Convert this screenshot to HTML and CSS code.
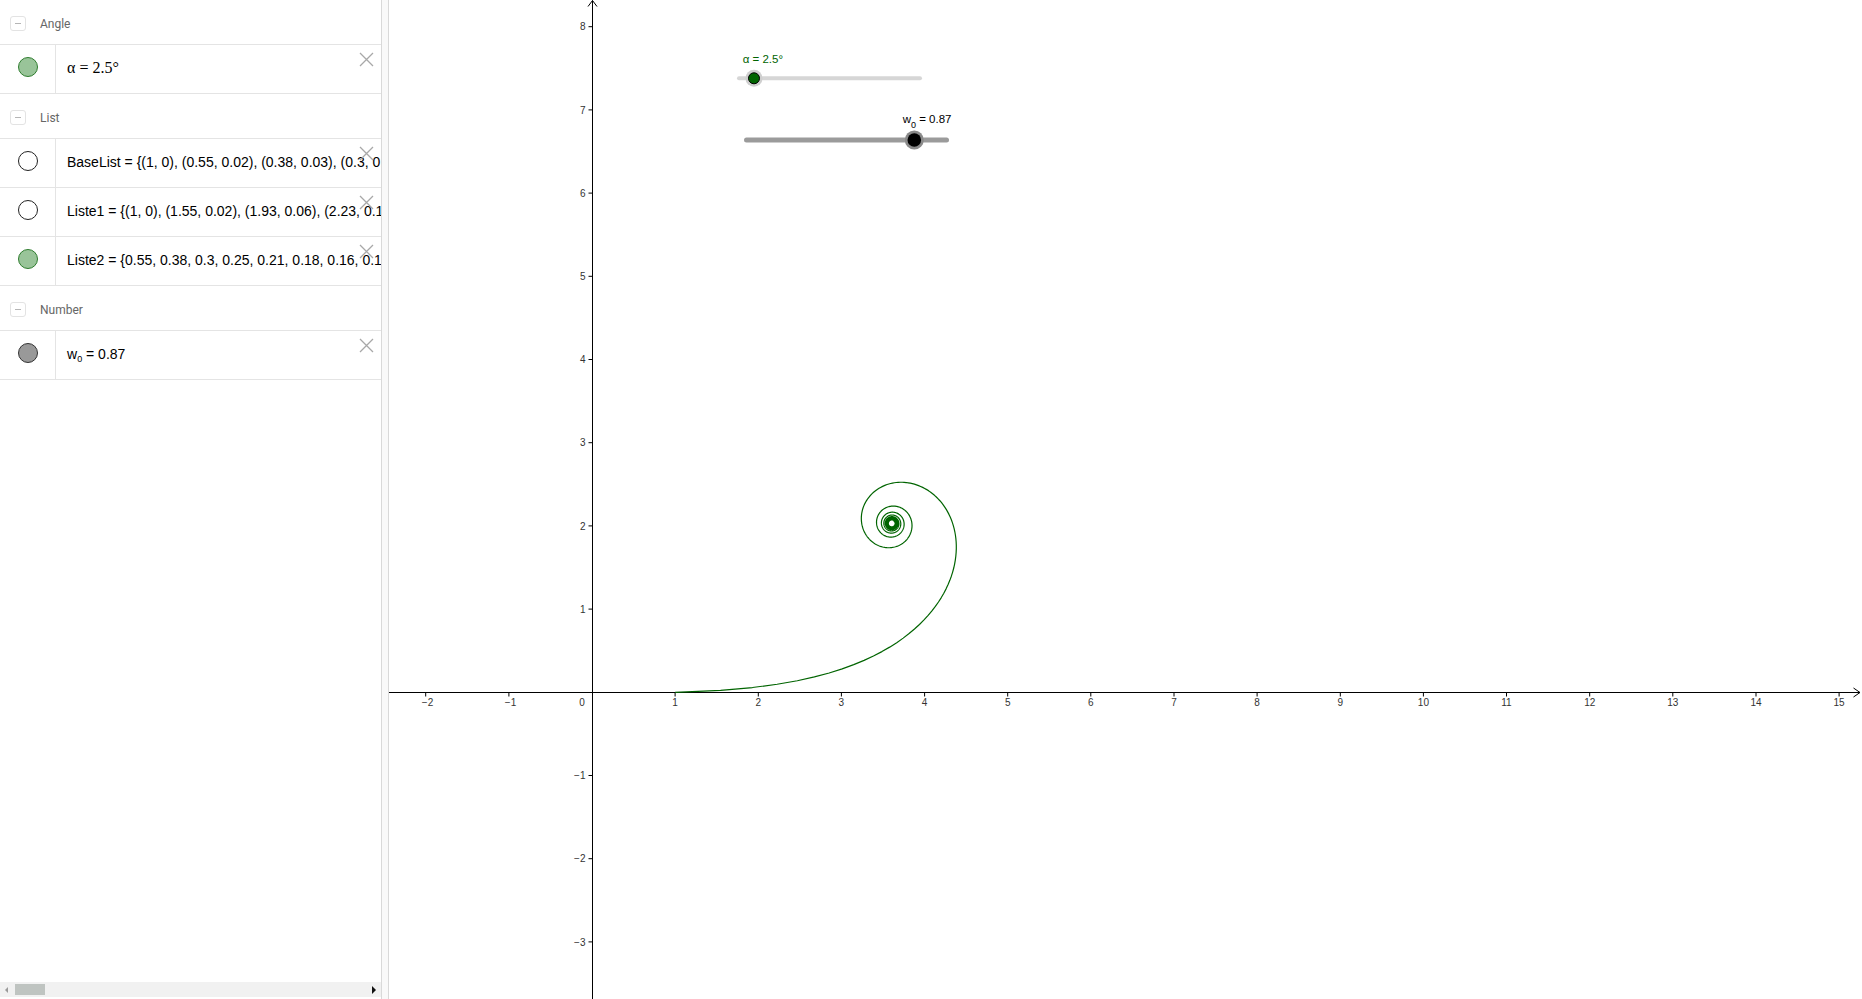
FILE: index.html
```html
<!DOCTYPE html>
<html>
<head>
<meta charset="utf-8">
<title>Spiral</title>
<link rel="stylesheet" href="styles.css">
</head>
<body>
<div class="app">
  <aside class="algebra">
    <div class="av-list">
      <div class="group"><span class="toggle"><span class="dash"></span></span><span class="group-name">Angle</span></div>
      <div class="item">
        <div class="marble-cell"><span class="marble green"></span></div>
        <div class="formula serif"><span class="text">α = 2.5°</span></div>
        <svg class="close" viewBox="0 0 15 15"><path d="M1 1 L14 14 M14 1 L1 14"/></svg>
      </div>

      <div class="group"><span class="toggle"><span class="dash"></span></span><span class="group-name">List</span></div>
      <div class="item">
        <div class="marble-cell"><span class="marble empty"></span></div>
        <div class="formula"><span class="text">BaseList = {(1, 0), (0.55, 0.02), (0.38, 0.03), (0.3, 0.04), (0.25, 0.05)}</span></div>
        <svg class="close" viewBox="0 0 15 15"><path d="M1 1 L14 14 M14 1 L1 14"/></svg>
      </div>
      <div class="item">
        <div class="marble-cell"><span class="marble empty"></span></div>
        <div class="formula"><span class="text">Liste1 = {(1, 0), (1.55, 0.02), (1.93, 0.06), (2.23, 0.1), (2.47, 0.15)}</span></div>
        <svg class="close" viewBox="0 0 15 15"><path d="M1 1 L14 14 M14 1 L1 14"/></svg>
      </div>
      <div class="item">
        <div class="marble-cell"><span class="marble green"></span></div>
        <div class="formula"><span class="text">Liste2 = {0.55, 0.38, 0.3, 0.25, 0.21, 0.18, 0.16, 0.15, 0.14, 0.13}</span></div>
        <svg class="close" viewBox="0 0 15 15"><path d="M1 1 L14 14 M14 1 L1 14"/></svg>
      </div>

      <div class="group"><span class="toggle"><span class="dash"></span></span><span class="group-name">Number</span></div>
      <div class="item">
        <div class="marble-cell"><span class="marble gray"></span></div>
        <div class="formula"><span class="text">w<sub>0</sub> = 0.87</span></div>
        <svg class="close" viewBox="0 0 15 15"><path d="M1 1 L14 14 M14 1 L1 14"/></svg>
      </div>
    </div>
    <div class="hscroll">
      <span class="arrow-left"></span>
      <span class="thumb"></span>
      <span class="track"></span>
      <span class="arrow-right"></span>
    </div>
  </aside>
  <div class="splitter"></div>
  <main class="graphics">
    <svg class="canvas" width="1473" height="999" viewBox="389 0 1473 999">
      <g class="axes">
        <line x1="389" y1="692.5" x2="1860" y2="692.5"/>
        <polyline class="arrow" points="1853.5,688 1860,692.5 1853.5,697"/>
        <line x1="592.5" y1="0.5" x2="592.5" y2="999"/>
        <polyline class="arrow" points="588,6.5 592.5,0.5 597,6.5"/>
      </g>
      <g class="ticks">
        <line x1="425.7" y1="692.5" x2="425.7" y2="696.5"/>
        <line x1="508.9" y1="692.5" x2="508.9" y2="696.5"/>
        <line x1="675.1" y1="692.5" x2="675.1" y2="696.5"/>
        <line x1="758.3" y1="692.5" x2="758.3" y2="696.5"/>
        <line x1="841.4" y1="692.5" x2="841.4" y2="696.5"/>
        <line x1="924.6" y1="692.5" x2="924.6" y2="696.5"/>
        <line x1="1007.7" y1="692.5" x2="1007.7" y2="696.5"/>
        <line x1="1090.8" y1="692.5" x2="1090.8" y2="696.5"/>
        <line x1="1174" y1="692.5" x2="1174" y2="696.5"/>
        <line x1="1257.1" y1="692.5" x2="1257.1" y2="696.5"/>
        <line x1="1340.3" y1="692.5" x2="1340.3" y2="696.5"/>
        <line x1="1423.4" y1="692.5" x2="1423.4" y2="696.5"/>
        <line x1="1506.5" y1="692.5" x2="1506.5" y2="696.5"/>
        <line x1="1589.7" y1="692.5" x2="1589.7" y2="696.5"/>
        <line x1="1672.8" y1="692.5" x2="1672.8" y2="696.5"/>
        <line x1="1756" y1="692.5" x2="1756" y2="696.5"/>
        <line x1="1839.1" y1="692.5" x2="1839.1" y2="696.5"/>

        <line x1="588.5" y1="26.7" x2="592.5" y2="26.7"/>
        <line x1="588.5" y1="109.9" x2="592.5" y2="109.9"/>
        <line x1="588.5" y1="193.1" x2="592.5" y2="193.1"/>
        <line x1="588.5" y1="276.3" x2="592.5" y2="276.3"/>
        <line x1="588.5" y1="359.5" x2="592.5" y2="359.5"/>
        <line x1="588.5" y1="442.7" x2="592.5" y2="442.7"/>
        <line x1="588.5" y1="525.9" x2="592.5" y2="525.9"/>
        <line x1="588.5" y1="609.1" x2="592.5" y2="609.1"/>
        <line x1="588.5" y1="775.5" x2="592.5" y2="775.5"/>
        <line x1="588.5" y1="858.7" x2="592.5" y2="858.7"/>
        <line x1="588.5" y1="941.9" x2="592.5" y2="941.9"/>
      </g>
      <g class="xlabels">
        <text x="427.5" y="706">−2</text>
        <text x="510.5" y="706">−1</text>
        <text x="582" y="706">0</text>
        <text x="675.1" y="706">1</text>
        <text x="758.3" y="706">2</text>
        <text x="841.4" y="706">3</text>
        <text x="924.6" y="706">4</text>
        <text x="1007.7" y="706">5</text>
        <text x="1090.8" y="706">6</text>
        <text x="1174" y="706">7</text>
        <text x="1257.1" y="706">8</text>
        <text x="1340.3" y="706">9</text>
        <text x="1423.4" y="706">10</text>
        <text x="1506.5" y="706">11</text>
        <text x="1589.7" y="706">12</text>
        <text x="1672.8" y="706">13</text>
        <text x="1756" y="706">14</text>
        <text x="1839.1" y="706">15</text>
      </g>
      <g class="ylabels">
        <text x="585.5" y="30.3">8</text>
        <text x="585.5" y="113.5">7</text>
        <text x="585.5" y="196.7">6</text>
        <text x="585.5" y="279.9">5</text>
        <text x="585.5" y="363.1">4</text>
        <text x="585.5" y="446.3">3</text>
        <text x="585.5" y="529.5">2</text>
        <text x="585.5" y="612.7">1</text>
        <text x="585.5" y="779.1">−1</text>
        <text x="585.5" y="862.3">−2</text>
        <text x="585.5" y="945.5">−3</text>
      </g>

      <path id="spiral" class="spiral" d=""/>

      <g class="slider alpha">
        <text class="slider-label green-label" x="742.7" y="63">α = 2.5°</text>
        <line class="track-light" x1="739" y1="78.3" x2="920" y2="78.3"/>
        <circle class="halo-light" cx="754" cy="78.3" r="8.5"/>
        <circle class="knob-green" cx="754" cy="78.3" r="5.5"/>
      </g>
      <g class="slider w0">
        <text class="slider-label" x="902.7" y="123.3">w<tspan class="sub" dy="4.5">0</tspan><tspan dy="-4.5"> = 0.87</tspan></text>
        <line class="track-dark" x1="746.5" y1="140" x2="946.5" y2="140"/>
        <circle class="halo-dark" cx="914.3" cy="140" r="9.5"/>
        <circle class="knob-black" cx="914.3" cy="140" r="6.8"/>
      </g>
    </svg>
  </main>
</div>
<script src="script.js"></script>
</body>
</html>
```

FILE: styles.css
```css
html, body {
  margin: 0;
  padding: 0;
  background: #ffffff;
}

body {
  width: 1862px;
  height: 999px;
  overflow: hidden;
  font-family: "Liberation Sans", Arial, sans-serif;
}

.app {
  display: flex;
  height: 999px;
}

/* ---------- Algebra view ---------- */
.algebra {
  flex: none;
  width: 381px;
  border-right: 1px solid #d9d9d9;
  display: flex;
  flex-direction: column;
  background: #fff;
}

.av-list {
  flex: 1;
}

.group {
  height: 45px;
  box-sizing: border-box;
  padding-top: 3px;
  border-bottom: 1px solid #e4e4e4;
  display: flex;
  align-items: center;
}

.toggle {
  width: 14px;
  height: 13px;
  border: 1px solid #e3e3e3;
  border-radius: 3px;
  margin-left: 10px;
  margin-right: 14px;
  display: flex;
  align-items: center;
  justify-content: center;
}

.dash {
  width: 6px;
  height: 1px;
  background: #b5b5b5;
}

.group-name {
  font-family: Roboto, "Liberation Sans", sans-serif;
  font-size: 12px;
  color: #666666;
}

.item {
  position: relative;
  height: 48px;
  box-sizing: content-box;
  border-bottom: 1px solid #e4e4e4;
  display: flex;
  align-items: stretch;
}

.marble-cell {
  flex: none;
  width: 56px;
  border-right: 1px solid #e4e4e4;
  display: flex;
  align-items: center;
  justify-content: center;
  padding-bottom: 4px;
  box-sizing: border-box;
}

.marble {
  width: 18px;
  height: 18px;
  border-radius: 50%;
  border: 1px solid #333;
}

.marble.green {
  background: #99c499;
  border-color: #2f7d2f;
}

.marble.empty {
  background: #fff;
  border-color: #222;
}

.marble.gray {
  background: #999999;
  border-color: #333333;
}

.formula {
  flex: 1;
  min-width: 0;
  padding-left: 11px;
  padding-bottom: 3px;
  display: flex;
  align-items: center;
  white-space: nowrap;
  overflow: hidden;
  font-family: "Liberation Sans", Arial, sans-serif;
  font-size: 14px;
  color: #000;
}

.formula .text {
  white-space: pre;
}

.formula.serif {
  font-family: "Liberation Serif", "Times New Roman", serif;
  font-size: 16px;
}

.formula sub {
  font-size: 9px;
  vertical-align: -3px;
  line-height: 0;
}

.close {
  position: absolute;
  right: 7px;
  top: 7px;
  width: 15px;
  height: 15px;
}

.close path {
  stroke: #a8a8a8;
  stroke-width: 1.3;
  fill: none;
}

.hscroll {
  flex: none;
  height: 15px;
  margin-bottom: 2px;
  background: #f1f1f1;
  display: flex;
  align-items: center;
}

.arrow-left {
  width: 0;
  height: 0;
  margin-left: 5px;
  border-top: 3px solid transparent;
  border-bottom: 3px solid transparent;
  border-right: 3px solid #9a9a9a;
}

.thumb {
  width: 30px;
  height: 11px;
  margin-left: 7px;
  background: #bfc4c1;
}

.track {
  flex: 1;
}

.arrow-right {
  width: 0;
  height: 0;
  margin-right: 5px;
  border-top: 4px solid transparent;
  border-bottom: 4px solid transparent;
  border-left: 4px solid #111;
}

.splitter {
  flex: none;
  width: 6px;
  background: #f9f9f9;
  border-right: 1px solid #d9d9d9;
}

/* ---------- Graphics view ---------- */
.graphics {
  flex: 1;
  min-width: 0;
  overflow: hidden;
  background: #fff;
}

.canvas {
  display: block;
}

.axes line,
.axes polyline,
.ticks line {
  stroke: #000;
  stroke-width: 1;
  fill: none;
}

.xlabels text,
.ylabels text {
  font-family: "Liberation Sans", Arial, sans-serif;
  font-size: 10px;
  fill: #333;
}

.xlabels text {
  text-anchor: middle;
}

.ylabels text {
  text-anchor: end;
}

.spiral {
  fill: none;
  stroke: #006400;
  stroke-width: 1.2;
  stroke-linejoin: round;
}

.slider-label {
  font-family: "Liberation Sans", Arial, sans-serif;
  font-size: 11.5px;
  fill: #000;
}

.slider-label .sub {
  font-size: 9px;
}

.green-label {
  fill: #006400;
}

.track-light {
  stroke: #d6d6d6;
  stroke-width: 4;
  stroke-linecap: round;
}

.track-dark {
  stroke: #9b9b9b;
  stroke-width: 5;
  stroke-linecap: round;
}

.halo-light {
  fill: #cfcfcf;
}

.knob-green {
  fill: #006400;
  stroke: #000;
  stroke-width: 1;
}

.halo-dark {
  fill: #8a8a8a;
}

.knob-black {
  fill: #000;
}
```

FILE: script.js
```js
(function () {
  var ox = 592, oy = 692.3, u = 83.15;
  var a = 2.5 * Math.PI / 180, w = 0.87, N = 1500;
  var x = 0, y = 0, d = '';
  for (var k = 1; k <= N; k++) {
    var len = Math.pow(k, -w);
    x += len * Math.cos((k - 1) * a);
    y += len * Math.sin((k - 1) * a);
    d += (k === 1 ? 'M' : 'L') + (ox + x * u).toFixed(2) + ' ' + (oy - y * u).toFixed(2);
  }
  document.getElementById('spiral').setAttribute('d', d);
})();
```
